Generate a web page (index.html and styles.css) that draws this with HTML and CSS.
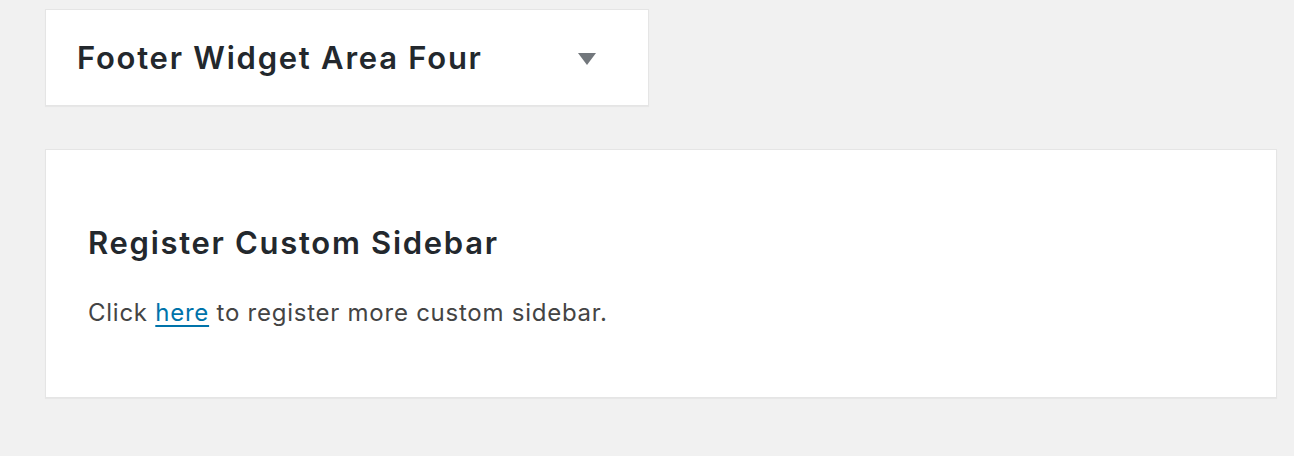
FILE: index.html
```html
<!DOCTYPE html>
<html>
<head>
<meta charset="utf-8">
<link rel="stylesheet" href="styles.css">
</head>
<body>
<div class="page">
  <div class="sidebar-box">
    <h2 class="sidebar-title">Footer Widget Area Four</h2>
    <span class="toggle"></span>
  </div>
  <div class="register-box">
    <h2 class="register-title">Register Custom Sidebar</h2>
    <p class="register-text">Click <a href="#">here</a> to register more custom sidebar.</p>
  </div>
</div>
</body>
</html>
```
FILE: styles.css
```css
html, body {
  margin: 0;
  padding: 0;
  background: #f1f1f1;
}
body {
  font-family: Inter, "Noto Sans", sans-serif;
  width: 1294px;
  height: 456px;
  overflow: hidden;
}
.page {
  padding: 9px 17px 0 45px;
  display: flex;
  flex-direction: column;
  align-items: flex-start;
}
.sidebar-box {
  box-sizing: border-box;
  width: 604px;
  height: 97px;
  background: #fff;
  border: 1px solid #e5e5e5;
  box-shadow: 0 1px 1px rgba(0,0,0,0.04);
  display: flex;
  align-items: center;
  justify-content: space-between;
  padding: 0 52px 0 31px;
}
.sidebar-title {
  margin: 0;
  font-size: 31px;
  font-weight: 600;
  color: #23282d;
  letter-spacing: 1.75px;
}
.toggle {
  width: 0;
  height: 0;
  border-left: 9px solid transparent;
  border-right: 9px solid transparent;
  border-top: 12px solid #72777c;
  margin-top: 3px;
}
.register-box {
  box-sizing: border-box;
  margin-top: 43px;
  width: 1232px;
  height: 249px;
  background: #fff;
  border: 1px solid #e5e5e5;
  box-shadow: 0 1px 1px rgba(0,0,0,0.04);
  padding: 74px 42px 0 42px;
}
.register-title {
  margin: 0;
  font-size: 31px;
  font-weight: 600;
  color: #23282d;
  line-height: 38px;
  letter-spacing: 1.7px;
}
.register-text {
  margin: 35px 0 0 0;
  font-size: 24px;
  color: #444;
  line-height: 32px;
  letter-spacing: 0.75px;
}
.register-text a {
  color: #0073aa;
  text-decoration: underline;
  text-decoration-thickness: 2px;
  text-underline-offset: 4px;
}
```
